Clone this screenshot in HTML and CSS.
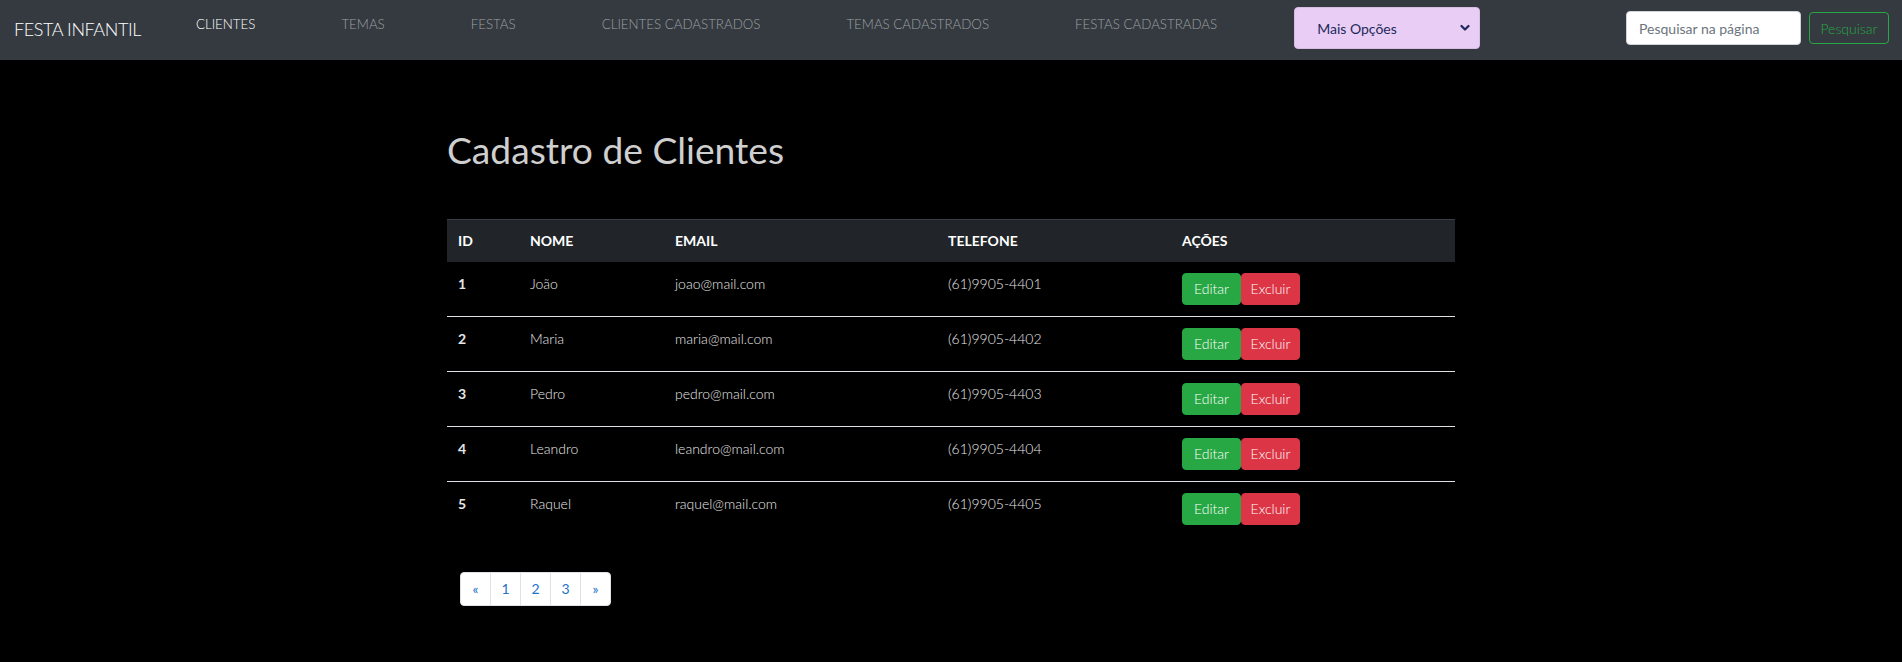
FILE: index.html
```html
<!DOCTYPE html>
<html lang="pt-BR">
<head>
<meta charset="utf-8">
<title>Cadastro de Clientes</title>
<link rel="stylesheet" href="styles.css">
</head>
<body>
<nav class="navbar">
  <a class="brand" href="#">FESTA INFANTIL</a>
  <ul class="nav-links">
    <li><a class="active" href="#">CLIENTES</a></li>
    <li><a href="#">TEMAS</a></li>
    <li><a href="#">FESTAS</a></li>
    <li><a href="#">CLIENTES CADASTRADOS</a></li>
    <li><a href="#">TEMAS CADASTRADOS</a></li>
    <li><a href="#">FESTAS CADASTRADAS</a></li>
  </ul>
  <div class="select-box">
    <span>Mais Opções</span>
    <svg class="chevron" width="10" height="8" viewBox="0 0 10 8"><path d="M1.5 2 L5 5.5 L8.5 2" fill="none" stroke="#1c2a5a" stroke-width="2.2" stroke-linecap="round" stroke-linejoin="round"/></svg>
  </div>
  <form class="search">
    <input type="text" placeholder="Pesquisar na página">
    <button type="button">Pesquisar</button>
  </form>
</nav>

<main class="container">
  <h1 class="title">Cadastro de Clientes</h1>
  <table class="clients">
    <colgroup>
      <col class="c-id"><col class="c-nome"><col class="c-email"><col class="c-tel"><col class="c-acoes">
    </colgroup>
    <thead>
      <tr><th>ID</th><th>NOME</th><th>EMAIL</th><th>TELEFONE</th><th>AÇÕES</th></tr>
    </thead>
    <tbody>
      <tr><th>1</th><td>João</td><td>joao@mail.com</td><td>(61)9905-4401</td><td><div class="actions"><a class="btn btn-green">Editar</a><a class="btn btn-red">Excluir</a></div></td></tr>
      <tr><th>2</th><td>Maria</td><td>maria@mail.com</td><td>(61)9905-4402</td><td><div class="actions"><a class="btn btn-green">Editar</a><a class="btn btn-red">Excluir</a></div></td></tr>
      <tr><th>3</th><td>Pedro</td><td>pedro@mail.com</td><td>(61)9905-4403</td><td><div class="actions"><a class="btn btn-green">Editar</a><a class="btn btn-red">Excluir</a></div></td></tr>
      <tr><th>4</th><td>Leandro</td><td>leandro@mail.com</td><td>(61)9905-4404</td><td><div class="actions"><a class="btn btn-green">Editar</a><a class="btn btn-red">Excluir</a></div></td></tr>
      <tr><th>5</th><td>Raquel</td><td>raquel@mail.com</td><td>(61)9905-4405</td><td><div class="actions"><a class="btn btn-green">Editar</a><a class="btn btn-red">Excluir</a></div></td></tr>
    </tbody>
  </table>
  <ul class="pager">
    <li><a href="#">«</a></li>
    <li><a href="#">1</a></li>
    <li><a href="#">2</a></li>
    <li><a href="#">3</a></li>
    <li><a href="#">»</a></li>
  </ul>
</main>
</body>
</html>
```
FILE: styles.css
```css
* { box-sizing: border-box; }

body {
  margin: 0;
  background: #000;
  font-family: Lato, "Noto Sans", sans-serif;
  color: #e6e6e6;
}

a { text-decoration: none; }

.navbar {
  display: flex;
  align-items: center;
  height: 60px;
  padding: 0 13px 0 14px;
  background: #343a40;
}

.brand {
  font-size: 18px;
  font-weight: 300;
  letter-spacing: -0.4px;
  color: #fff;
  line-height: 30px;
  margin-right: 12px;
  margin-top: -2px;
}

.nav-links {
  display: flex;
  list-style: none;
  margin: 0;
  padding: 0;
  align-self: flex-start;
  padding-top: 14px;
}

.nav-links a {
  display: block;
  padding: 0 43px;
  font-size: 13.3px;
  font-weight: 300;
  line-height: 21px;
  color: #9da0a3;
}

.nav-links a.active { color: #fff; }

.select-box {
  display: flex;
  align-items: center;
  justify-content: space-between;
  width: 186px;
  height: 42px;
  margin-left: 34px;
  margin-top: -4px;
  padding: 0 9px 0 22px;
  background: #e9cdf5;
  border: 1px solid #d6bde2;
  border-radius: 4px;
  font-size: 14px;
  color: #1c2a5a;
}

.search {
  display: flex;
  align-items: center;
  gap: 8px;
  margin-left: auto;
  margin-top: -4px;
}

.search input {
  width: 175px;
  height: 34px;
  padding: 0 12px;
  border: 1px solid #ced4da;
  border-radius: 4px;
  font-family: inherit;
  font-size: 14px;
  background: #fff;
}

.search input::placeholder { color: #6c757d; }

.search button {
  width: 80px;
  height: 32px;
  padding: 0;
  background: transparent;
  border: 1px solid #28a745;
  border-radius: 4px;
  color: #28a745;
  font-family: inherit;
  font-size: 14px;
  font-weight: 300;
}

.container {
  width: 1008px;
  margin: 0 auto;
}

.title {
  margin: 66px 0 45px;
  font-size: 37.2px;
  font-weight: 400;
  line-height: 48px;
  color: #cfcfcf;
}

.clients {
  width: 1008px;
  table-layout: fixed;
  border-collapse: collapse;
  font-size: 14px;
}

.c-id { width: 72px; }
.c-nome { width: 145px; }
.c-email { width: 273px; }
.c-tel { width: 234px; }
.c-acoes { width: 284px; }

.clients th, .clients td {
  padding: 11px;
  line-height: 21px;
  text-align: left;
  vertical-align: top;
}

.clients thead th {
  background: #212529;
  color: #fff;
  font-weight: 700;
  box-shadow: inset 0 1px 0 #3a3f45;
}

.clients tbody th {
  font-weight: 700;
  color: #e6e6e6;
}

.clients tbody td {
  font-weight: 300;
  color: #e8e8e8;
}

.clients tbody tr + tr th,
.clients tbody tr + tr td {
  border-top: 1px solid #dee2e6;
}

.actions { display: flex; }

.btn {
  display: block;
  width: 59px;
  padding: 5px 0;
  line-height: 20px;
  border-radius: 4px;
  border: 1px solid transparent;
  color: #fff;
  font-size: 14px;
  text-align: center;
}

.btn-green { background: #28a745; border-color: #28a745; }
.btn-red { background: #dc3545; border-color: #dc3545; }

.pager {
  display: flex;
  list-style: none;
  margin: 36px 0 0 13px;
  padding: 0;
}

.pager li + li { margin-left: -1px; }

.pager a {
  display: block;
  width: 31px;
  height: 34px;
  line-height: 32px;
  text-align: center;
  font-size: 14px;
  color: #1e73c8;
  background: #fff;
  border: 1px solid #dee2e6;
}

.pager li:first-child a { border-radius: 4px 0 0 4px; }
.pager li:last-child a { border-radius: 0 4px 4px 0; }
```
